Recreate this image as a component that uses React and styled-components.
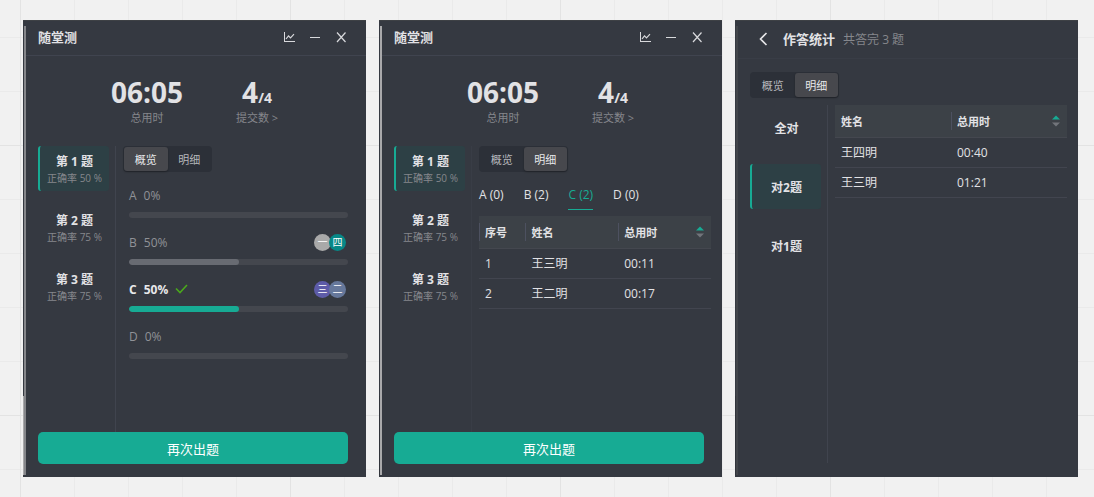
import React, { useState } from "react";
import styled, { createGlobalStyle } from "styled-components";

const questions = [
  { title: "第 1 题", note: "正确率 50 %" },
  { title: "第 2 题", note: "正确率 75 %" },
  { title: "第 3 题", note: "正确率 75 %" },
];

const groups = [{ title: "全对" }, { title: "对2题" }, { title: "对1题" }];

const options = [
  { key: "A", rate: 0, users: [] },
  {
    key: "B",
    rate: 50,
    users: [
      { name: "一", color: "#a9a9a9" },
      { name: "四", color: "#078887" },
    ],
  },
  {
    key: "C",
    rate: 50,
    correct: true,
    users: [
      { name: "三", color: "#5d5ba8" },
      { name: "二", color: "#66789b" },
    ],
  },
  { key: "D", rate: 0, users: [] },
];

const choices = ["A (0)", "B (2)", "C (2)", "D (0)"];

const ChartIcon = () => (
  <svg width="12" height="12" viewBox="0 0 12 12" fill="none" stroke="#d8d9dc">
    <path d="M1.500 1V11" />
    <path d="M1.500 10.500H12" />
    <path d="M3 8L5.500 4.800L7.500 6.800L11 3.200" strokeWidth="1.200" />
  </svg>
);

const MinusIcon = () => (
  <svg width="12" height="12" viewBox="0 0 12 12" fill="none" stroke="#d8d9dc">
    <path d="M1 6.500H11" />
  </svg>
);

const CloseIcon = () => (
  <svg width="12" height="12" viewBox="0 0 12 12" fill="none" stroke="#d8d9dc" strokeWidth="1.200">
    <path d="M2 1.500L10.500 11M10.500 1.500L2 11" />
  </svg>
);

const BackIcon = () => (
  <svg width="10" height="14" viewBox="0 0 10 14" fill="none" stroke="#e6e6e8" strokeWidth="1.600">
    <path d="M8.500 1L2.500 7L8.500 13" />
  </svg>
);

const CheckIcon = () => (
  <svg width="13" height="10" viewBox="0 0 13 10" fill="none" stroke="#4aa81c" strokeWidth="1.600">
    <path d="M1 4.500L5 8.500L12 1" />
  </svg>
);

const SortIcon = () => (
  <svg width="8" height="12" viewBox="0 0 8 12">
    <path d="M0 4.500L4 0.500L8 4.500Z" fill="#17ab94" />
    <path d="M0 7.500L4 11.500L8 7.500Z" fill="#72757b" />
  </svg>
);

const ViewTabs = ({ initial }) => {
  const [view, setView] = useState(initial);
  return (
    <Segmented>
      {["概览", "明细"].map((name) => (
        <Segment key={name} $active={view === name} onClick={() => setView(name)}>
          {name}
        </Segment>
      ))}
    </Segmented>
  );
};

const SideNav = ({ items, initial = 0, line = "#40444e" }) => {
  const [selected, setSelected] = useState(initial);
  return (
    <Nav $line={line}>
      {items.map((item, index) => (
        <NavItem
          key={item.title}
          $active={index === selected}
          onClick={() => setSelected(index)}
        >
          <NavTitle>{item.title}</NavTitle>
          {item.note && <NavNote>{item.note}</NavNote>}
        </NavItem>
      ))}
    </Nav>
  );
};

const QuizPanel = ({ edge, foot, line, initial, children }) => (
  <Panel $edge={edge} $foot={foot}>
    <Header>
      <Title>随堂测</Title>
      <Actions>
        <IconButton aria-label="统计">
          <ChartIcon />
        </IconButton>
        <IconButton aria-label="最小化">
          <MinusIcon />
        </IconButton>
        <IconButton aria-label="关闭">
          <CloseIcon />
        </IconButton>
      </Actions>
    </Header>
    <Stats>
      <Stat>
        <Figure>06:05</Figure>
        <StatLabel>总用时</StatLabel>
      </Stat>
      <Stat>
        <Figure>
          4<Total>/4</Total>
        </Figure>
        <StatLabel>提交数 &gt;</StatLabel>
      </Stat>
    </Stats>
    <Body>
      <SideNav items={questions} line={line} />
      <Content>
        <ViewTabs initial={initial} />
        {children}
      </Content>
    </Body>
    <Submit>再次出题</Submit>
  </Panel>
);

const Overview = () => (
  <OptionList>
    {options.map((option) => (
      <Option key={option.key}>
        <OptionHead $correct={option.correct}>
          <span>{option.key}</span>
          <span>{option.rate}%</span>
          {option.correct && <CheckIcon />}
          <Avatars>
            {option.users.map((user) => (
              <Avatar key={user.name} $color={user.color}>
                {user.name}
              </Avatar>
            ))}
          </Avatars>
        </OptionHead>
        <Track>
          <Fill $correct={option.correct} style={{ width: `${option.rate}%` }} />
        </Track>
      </Option>
    ))}
  </OptionList>
);

const ResultTable = ({ columns, rows }) => (
  <Table>
    <colgroup>
      {columns.map((column) => (
        <Col key={column.name} $width={column.width} />
      ))}
    </colgroup>
    <thead>
      <tr>
        {columns.map((column) => (
          <Th key={column.name}>
            <ThInner $line={column.line}>
              {column.name}
              {column.sortable && <SortIcon />}
            </ThInner>
          </Th>
        ))}
      </tr>
    </thead>
    <tbody>
      {rows.map((row) => (
        <tr key={row.join()}>
          {row.map((cell) => (
            <Td key={cell}>{cell}</Td>
          ))}
        </tr>
      ))}
    </tbody>
  </Table>
);

const Details = () => {
  const [choice, setChoice] = useState("C (2)");
  return (
    <>
      <Choices>
        {choices.map((name) => (
          <Choice key={name} $active={name === choice} onClick={() => setChoice(name)}>
            {name}
          </Choice>
        ))}
      </Choices>
      <ResultTable
        columns={[
          { name: "序号", width: "20%", line: true },
          { name: "姓名", width: "40%", line: true },
          { name: "总用时", width: "40%", line: true, sortable: true },
        ]}
        rows={[
          ["1", "王三明", "00:11"],
          ["2", "王二明", "00:17"],
        ]}
      />
    </>
  );
};

const App = () => {
  return (
    <>
      <GlobalStyle />
      <Board>
        <QuizPanel edge="#85868a" foot="#a9a9ab" initial="概览">
          <Overview />
        </QuizPanel>
        <QuizPanel edge="#a9a9ab" foot="#30333a" line="#393d46" initial="明细">
          <Details />
        </QuizPanel>
        <Panel $edge="#42454a" $foot="#30333a">
          <StatsHeader>
            <IconButton aria-label="返回">
              <BackIcon />
            </IconButton>
            <Title>作答统计</Title>
            <Subtitle>共答完 3 题</Subtitle>
          </StatsHeader>
          <TabsRow>
            <ViewTabs initial="明细" />
          </TabsRow>
          <Body $last>
            <SideNav items={groups} initial={1} />
            <Content>
              <ResultTable
                columns={[
                  { name: "姓名", width: "50%" },
                  { name: "总用时", width: "50%", line: true, sortable: true },
                ]}
                rows={[
                  ["王四明", "00:40"],
                  ["王三明", "01:21"],
                ]}
              />
            </Content>
          </Body>
        </Panel>
      </Board>
    </>
  );
};

export default App;

const GlobalStyle = createGlobalStyle`
  * {
    box-sizing: border-box;
  }
  body {
    margin: 0;
    background-color: #f1f1f1;
    font-family: "Open Sans", "Noto Sans CJK SC", sans-serif;
    font-size: 12px;
    color: #e2e2e5;
  }
  button {
    margin: 0;
    padding: 0;
    border: none;
    background: none;
    color: inherit;
    font: inherit;
    cursor: pointer;
  }
  svg {
    display: block;
    flex: none;
  }
`;

const Board = styled.main`
  display: grid;
  grid-template-columns: repeat(3, minmax(0, 1fr));
  gap: 13px;
  min-height: 100vh;
  padding: 20px 16px 20px 23px;
  background-image:
    linear-gradient(90deg, #e3e3e3 1px, transparent 1px),
    linear-gradient(#e3e3e3 1px, transparent 1px),
    linear-gradient(90deg, #eaeaea 1px, transparent 1px),
    linear-gradient(#eaeaea 1px, transparent 1px);
  background-size: 270px 270px, 270px 270px, 54px 54px, 54px 54px;
  background-position: 20px 0, 0 145px, 20px 0, 0 37px;
`;

const Panel = styled.section`
  display: flex;
  flex-direction: column;
  background:
    linear-gradient(${(props) => props.$edge}, ${(props) => props.$edge}) 1px 5px / 2px calc(100% - 7px) no-repeat,
    linear-gradient(${(props) => props.$foot}, ${(props) => props.$foot}) 0 375px / 1px calc(100% - 377px) no-repeat,
    #353941;
  border-top: 1px solid #3e4145;
`;

const Header = styled.header`
  display: flex;
  align-items: center;
  justify-content: space-between;
  height: 35px;
  margin-left: 3px;
  padding: 0 18px 2px 12px;
  border-bottom: 1px solid #40444f;
`;

const StatsHeader = styled(Header)`
  justify-content: flex-start;
  height: 38px;
  padding-left: 18px;
  border-bottom-color: #393d46;
`;

const Title = styled.h2`
  margin: 0;
  font-size: 13px;
  font-weight: 700;
  line-height: 20px;
`;

const Subtitle = styled.span`
  margin-left: 8px;
  color: #85878c;
`;

const Actions = styled.div`
  display: flex;
  gap: 12px;
`;

const IconButton = styled.button`
  display: flex;
  align-items: center;
  justify-content: center;
  width: 14px;
  height: 20px;

  & + h2 {
    margin-left: 13px;
  }
`;

const Stats = styled.div`
  display: flex;
  justify-content: center;
  gap: 53px;
  height: 90px;
  padding-top: 18px;
`;

const Stat = styled.div`
  display: flex;
  flex-direction: column;
  align-items: center;
`;

const Figure = styled.div`
  height: 36px;
  font-size: 28px;
  font-weight: 700;
  line-height: 36px;
`;

const Total = styled.span`
  font-size: 14px;
  line-height: 14px;
`;

const StatLabel = styled.div`
  font-size: 11px;
  line-height: 16px;
  color: #85878c;
`;

const Body = styled.div`
  display: flex;
  flex: 1;
  margin: 0 11px ${(props) => (props.$last ? "14px" : "0")} 15px;
`;

const Nav = styled.nav`
  display: flex;
  flex-direction: column;
  gap: 14px;
  flex: none;
  width: 78px;
  padding-right: 6px;
  border-right: 1px solid ${(props) => props.$line};
`;

const NavItem = styled.button`
  height: 45px;
  padding-top: 2px;
  border-left: 2px solid ${(props) => (props.$active ? "#17ab94" : "transparent")};
  border-radius: 3px;
  background-color: ${(props) => (props.$active ? "#2d4045" : "transparent")};
`;

const NavTitle = styled.div`
  font-weight: 700;
  line-height: 16px;
`;

const NavNote = styled.div`
  font-size: 10px;
  line-height: 16px;
  color: #85878c;
`;

const Content = styled.div`
  flex: 1;
  min-width: 0;
  padding-left: 7px;
`;

const TabsRow = styled.div`
  padding: 13px 15px 7px;
`;

const Segmented = styled.div`
  display: flex;
  width: 89px;
  height: 26px;
  padding: 1px;
  border-radius: 4px;
  background-color: #2c3038;
`;

const Segment = styled.button`
  flex: 1;
  border-radius: 3px;
  font-size: 11px;
  color: ${(props) => (props.$active ? "#e8e8ea" : "#b6b7bb")};
  background-color: ${(props) => (props.$active ? "#47484d" : "transparent")};
  box-shadow: ${(props) => (props.$active ? "0 1px 2px rgba(0, 0, 0, 0.3)" : "none")};
`;

const OptionList = styled.div`
  display: flex;
  flex-direction: column;
  gap: 14px;
  padding: 13px 7px 0 6px;
`;

const Option = styled.div`
  display: flex;
  flex-direction: column;
  gap: 7px;
`;

const OptionHead = styled.div`
  display: flex;
  align-items: center;
  gap: 7px;
  height: 20px;
  font-weight: ${(props) => (props.$correct ? 700 : 400)};
  color: ${(props) => (props.$correct ? "#e8e8ea" : "#909297")};
`;

const Avatars = styled.div`
  display: flex;
  margin-left: auto;
  padding-right: 2px;
`;

const Avatar = styled.span`
  width: 17px;
  height: 17px;
  margin-left: -2px;
  border-radius: 50%;
  font-size: 10px;
  font-weight: 400;
  line-height: 17px;
  text-align: center;
  color: white;
  background-color: ${(props) => props.$color};
`;

const Track = styled.div`
  height: 6px;
  border-radius: 3px;
  overflow: hidden;
  background-color: #44474e;
`;

const Fill = styled.div`
  height: 100%;
  border-radius: 3px;
  background-color: ${(props) => (props.$correct ? "#17ab94" : "#686b72")};
`;

const Choices = styled.div`
  display: flex;
  gap: 20px;
  padding: 13px 0 6px;
`;

const Choice = styled.button`
  height: 25px;
  padding-bottom: 6px;
  border-bottom: 1px solid ${(props) => (props.$active ? "#17ab94" : "transparent")};
  color: ${(props) => (props.$active ? "#17ab94" : "inherit")};
`;

const Table = styled.table`
  width: 100%;
  table-layout: fixed;
  border-collapse: collapse;
  text-align: left;
`;

const Col = styled.col`
  width: ${(props) => props.$width};
`;

const Th = styled.th`
  height: 32px;
  padding: 0;
  border-bottom: 1px solid #44474f;
  background-color: #3c4147;
`;

const ThInner = styled.div`
  display: flex;
  align-items: center;
  justify-content: space-between;
  height: 18px;
  padding: 0 7px 0 5px;
  border-left: 1px solid ${(props) => (props.$line ? "#4d5160" : "transparent")};
  font-size: 11px;
`;

const Td = styled.td`
  height: 30px;
  padding: 0 6px;
  border-bottom: 1px solid #42454f;
`;

const Submit = styled.button`
  height: 32px;
  margin: 0 18px 13px 15px;
  border-radius: 5px;
  font-size: 13px;
  color: white;
  background-color: #17ab94;
`;
